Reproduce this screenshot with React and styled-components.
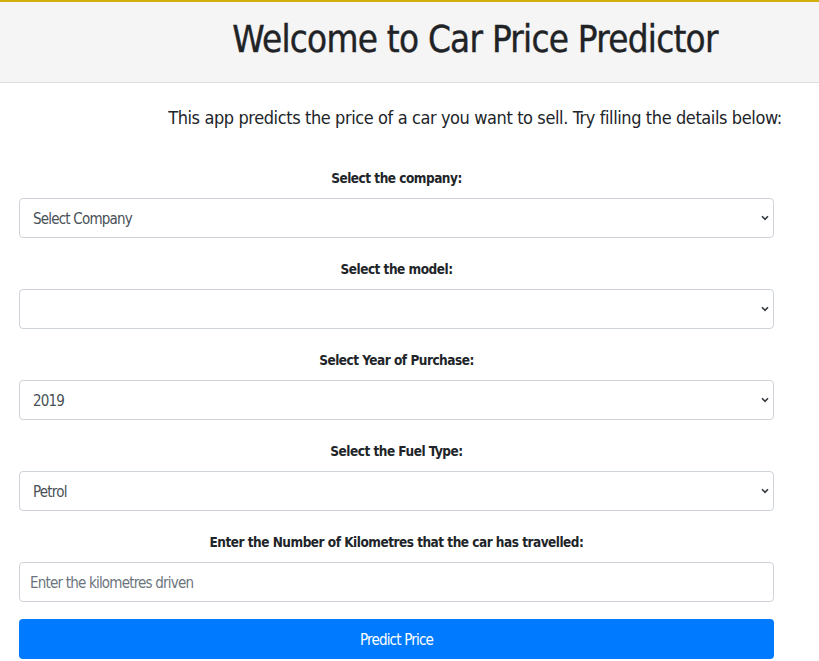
import React from "react";
import styled, { createGlobalStyle } from "styled-components";

const GlobalStyle = createGlobalStyle`
  body {
    margin: 0;
    background: #fff;
    font-family: "DejaVu Sans Condensed", "Liberation Sans Narrow", "Liberation Sans", sans-serif;
    color: #212529;
  }
`;

const Header = styled.header`
  border-top: 2px solid #d4ae0b;
  border-bottom: 1px solid #dedede;
  background: #f5f5f5;
  height: 80px;
  box-sizing: content-box;
  display: flex;
  align-items: center;
  justify-content: center;
  padding-left: 131px;
`;

const Title = styled.h1`
  margin: 0 0 6px;
  font-size: 36.5px;
  font-weight: 500;
  letter-spacing: -0.75px;
  color: #1f2326;
  -webkit-text-stroke: 0.4px #1f2326;
`;

const Intro = styled.p`
  margin: 20px 0 0;
  padding-left: 131px;
  text-align: center;
  font-size: 18px;
  letter-spacing: -0.4px;
  line-height: 30px;
  white-space: nowrap;
  color: #212529;
`;

const Form = styled.form`
  width: 755px;
  margin: 35px 0 0 19px;
  display: flex;
  flex-direction: column;
`;

const Group = styled.div`
  display: flex;
  flex-direction: column;
  margin-bottom: 21px;
`;

const Label = styled.label`
  text-align: center;
  font-weight: 700;
  font-size: 13.5px;
  letter-spacing: -0.5px;
  line-height: 21px;
  margin-bottom: 9px;
  color: #212529;
`;

const SelectWrap = styled.div`
  position: relative;
`;

const fieldText = `
  font-family: inherit;
  font-size: 15px;
  letter-spacing: -0.8px;
`;

const Select = styled.select`
  width: 100%;
  height: 40px;
  appearance: none;
  border: 1px solid #ced4da;
  border-radius: 4px;
  background: #fff;
  padding: 2px 13px 0;
  color: #495057;
  ${fieldText}
`;

const Chevron = styled.svg`
  position: absolute;
  right: 5px;
  top: 17px;
  width: 8px;
  height: 6px;
  pointer-events: none;
`;

const Input = styled.input`
  box-sizing: border-box;
  width: 100%;
  height: 40px;
  border: 1px solid #ced4da;
  border-radius: 4px;
  padding: 2px 10px 0;
  color: #495057;
  ${fieldText}
  &::placeholder {
    color: #6c757d;
  }
`;

const Button = styled.button`
  height: 40px;
  margin-top: -4px;
  padding-top: 2px;
  border: none;
  border-radius: 4px;
  background: #007bff;
  color: #fff;
  ${fieldText}
`;

function Dropdown({ value, options }) {
  return (
    <SelectWrap>
      <Select defaultValue={value}>
        {options.map((o) => (
          <option key={o}>{o}</option>
        ))}
      </Select>
      <Chevron viewBox="0 0 8 6">
        <path d="M1 1.2 L4 4.4 L7 1.2" fill="none" stroke="#343a40" strokeWidth="1.6" />
      </Chevron>
    </SelectWrap>
  );
}

export default function App() {
  return (
    <>
      <GlobalStyle />
      <Header>
        <Title>Welcome to Car Price Predictor</Title>
      </Header>
      <Intro>This app predicts the price of a car you want to sell. Try filling the details below:</Intro>
      <Form onSubmit={(e) => e.preventDefault()}>
        <Group>
          <Label>Select the company:</Label>
          <Dropdown value="Select Company" options={["Select Company", "Audi", "BMW", "Hyundai", "Maruti"]} />
        </Group>
        <Group>
          <Label>Select the model:</Label>
          <Dropdown value="" options={[""]} />
        </Group>
        <Group>
          <Label>Select Year of Purchase:</Label>
          <Dropdown value="2019" options={["2019", "2018", "2017", "2016"]} />
        </Group>
        <Group>
          <Label>Select the Fuel Type:</Label>
          <Dropdown value="Petrol" options={["Petrol", "Diesel", "LPG"]} />
        </Group>
        <Group>
          <Label>Enter the Number of Kilometres that the car has travelled:</Label>
          <Input placeholder="Enter the kilometres driven" />
        </Group>
        <Button type="submit">Predict Price</Button>
      </Form>
    </>
  );
}
